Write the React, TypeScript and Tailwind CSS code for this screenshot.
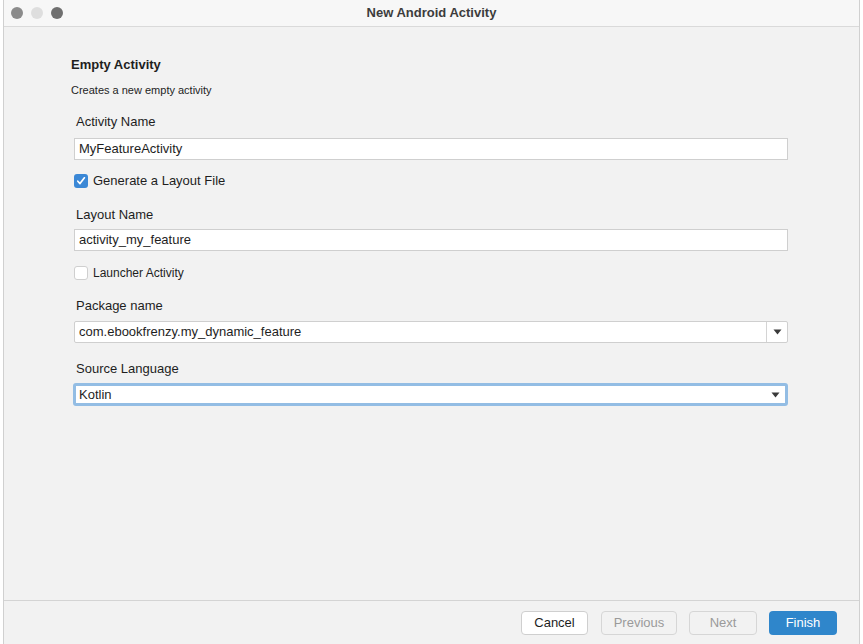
import React from "react";

const font = { fontFamily: '"Liberation Sans", Arial, sans-serif' };

function Field({ value }: { value: string }) {
  return (
    <div className="h-[22px] w-[714px] bg-white border border-[#cfcfcf] flex items-center px-[4px] text-[13px] text-[#1e1e1e]">
      {value}
    </div>
  );
}

function Arrow() {
  return (
    <svg width="9" height="6" viewBox="0 0 9 6">
      <path d="M0.5 0.5h8L4.5 5.5z" fill="#3a3a3a" />
    </svg>
  );
}

export default function App() {
  return (
    <div className="w-[863px] h-[644px] bg-white overflow-hidden" style={font}>
      <div className="ml-[3px] w-[857px] h-[644px] flex flex-col bg-[#f2f2f2] border-l border-r border-[#d0d0d0]">
        {/* Title bar */}
        <div className="h-[27px] shrink-0 relative flex items-center justify-center bg-[#f7f7f7] border-b border-[#dadada]">
          <div className="absolute left-[7px] top-[7px] flex gap-[8px]">
            <span className="w-[12px] h-[12px] rounded-full bg-[#8b8b8b]" />
            <span className="w-[12px] h-[12px] rounded-full bg-[#dedede]" />
            <span className="w-[12px] h-[12px] rounded-full bg-[#6f6f6f]" />
          </div>
          <span className="text-[13px] font-bold text-[#3c3c3c]">New Android Activity</span>
        </div>

        {/* Content */}
        <div className="flex-1 pl-[67px] pt-[30px] text-[#1e1e1e]">
          <div className="text-[13px] font-bold leading-[16px]">Empty Activity</div>
          <div className="mt-[11px] text-[11px] leading-[13px]">Creates a new empty activity</div>

          <div className="ml-[3px]">
            <div className="mt-[17px] ml-[2px] text-[13px] leading-[16px]">Activity Name</div>
            <div className="mt-[8px]">
              <Field value="MyFeatureActivity" />
            </div>

            <div className="mt-[14px] flex items-center gap-[5px] h-[14px]">
              <span className="w-[14px] h-[14px] rounded-[3px] bg-[#3b88d6] flex items-center justify-center">
                <svg width="10" height="10" viewBox="0 0 10 10">
                  <path d="M1.8 5.2l2.2 2.4L8.4 1.8" stroke="#fff" strokeWidth="1.7" fill="none" strokeLinecap="round" strokeLinejoin="round" />
                </svg>
              </span>
              <span className="text-[13px]">Generate a Layout File</span>
            </div>

            <div className="mt-[19px] ml-[2px] text-[13px] leading-[16px]">Layout Name</div>
            <div className="mt-[6px]">
              <Field value="activity_my_feature" />
            </div>

            <div className="mt-[15px] flex items-center gap-[5px] h-[14px]">
              <span className="w-[14px] h-[14px] rounded-[3px] bg-white border border-[#cfcfcf]" />
              <span className="text-[12px]">Launcher Activity</span>
            </div>

            <div className="mt-[18px] ml-[2px] text-[13px] leading-[16px]">Package name</div>
            <div className="mt-[7px] h-[22px] w-[714px] bg-white border border-[#cfcfcf] rounded-[2px] flex items-center">
              <span className="flex-1 px-[4px] text-[13px]">com.ebookfrenzy.my_dynamic_feature</span>
              <span className="w-[21px] h-full border-l border-[#d4d4d4] flex items-center justify-center">
                <Arrow />
              </span>
            </div>

            <div className="mt-[18px] ml-[2px] text-[13px] leading-[16px]">Source Language</div>
            <div className="mt-[6px] h-[23px] w-[715px] ml-[-1px] bg-white border-[3px] border-[#93bde4] rounded-[3px] flex items-center">
              <span className="flex-1 px-[3px] text-[13px]">Kotlin</span>
              <span className="w-[20px] flex items-center justify-center">
                <Arrow />
              </span>
            </div>
          </div>
        </div>

        {/* Footer */}
        <div className="h-[44px] shrink-0 border-t border-[#d4d4d4] flex items-start justify-end pt-[10px] pr-[22px] text-[13px]">
          <button className="w-[67px] h-[24px] rounded-[4px] bg-white border border-[#cfcfcf] text-[#1e1e1e]">Cancel</button>
          <button className="ml-[13px] w-[76px] h-[24px] rounded-[4px] bg-[#f2f2f2] border border-[#d6d6d6] text-[#9a9a9a]">Previous</button>
          <button className="ml-[12px] w-[68px] h-[24px] rounded-[4px] bg-[#f2f2f2] border border-[#d6d6d6] text-[#9a9a9a]">Next</button>
          <button className="ml-[12px] w-[68px] h-[24px] rounded-[4px] bg-[#2f86cb] text-white">Finish</button>
        </div>
      </div>
    </div>
  );
}
